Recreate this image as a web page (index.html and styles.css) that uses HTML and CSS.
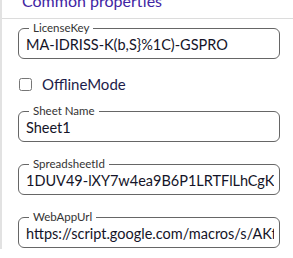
FILE: index.html
```html
<!DOCTYPE html>
<html lang="en">
<head>
    <meta charset="UTF-8">
    <meta name="viewport" content="width=device-width, initial-scale=1.0">
    <title>Common properties</title>
    <link rel="stylesheet" href="styles.css">
</head>
<body>

    <div class="panel">
        <div class="panel-header">Common properties</div>

        <fieldset class="field">
            <legend>LicenseKey</legend>
            <input type="text" class="field-input" value="MA-IDRISS-K(b,S}%1C)-GSPRO">
        </fieldset>

        <label class="check">
            <input type="checkbox" class="check-box">
            <span>OfflineMode</span>
        </label>

        <fieldset class="field">
            <legend>Sheet Name</legend>
            <input type="text" class="field-input" value="Sheet1">
        </fieldset>

        <fieldset class="field">
            <legend>SpreadsheetId</legend>
            <input type="text" class="field-input" value="1DUV49-lXY7w4ea9B6P1LRTFlLhCgKW2wJ3sE">
        </fieldset>

        <fieldset class="field">
            <legend>WebAppUrl</legend>
            <input type="text" class="field-input" value="https://script.google.com/macros/s/AKfycbx">
        </fieldset>
    </div>

</body>
</html>
```

FILE: styles.css
```css
body {
    margin: 0;
    font-family: Lato, "Open Sans", sans-serif;
    background: #fff;
}
.panel {
    border-left: 2px solid #e2e2e2;
    min-height: 258px;
    box-sizing: border-box;
}
.panel-header {
    margin-top: -9px;
    padding: 0 0 7px 20px;
    font-size: 16px;
    line-height: 20px;
    color: #3f25a3;
    border-bottom: 1px solid #dcdcdc;
}
.field {
    margin: 0 13px 0 16px;
    padding: 0 5px 3px 7px;
    border: 1px solid #666;
    border-radius: 6px;
}
.field legend {
    margin-left: 3px;
    padding: 0 4px;
    font-size: 11.5px;
    line-height: 12px;
    color: #333;
}
.panel-header + .field {
    margin-top: 3px;
}
.field-input {
    display: block;
    width: 100%;
    box-sizing: border-box;
    border: none;
    outline: none;
    padding: 0;
    font-family: inherit;
    font-size: 14.5px;
    line-height: 21px;
    color: #141428;
    background: transparent;
}
.check {
    display: flex;
    align-items: center;
    gap: 10px;
    margin: 16px 0 0 17px;
    font-size: 15px;
    line-height: 18px;
    color: #1c1c4a;
}
.check-box {
    margin: 0;
    width: 13px;
    height: 13px;
}
.check + .field {
    margin-top: 12px;
}
.field + .field {
    margin-top: 16px;
}
```
